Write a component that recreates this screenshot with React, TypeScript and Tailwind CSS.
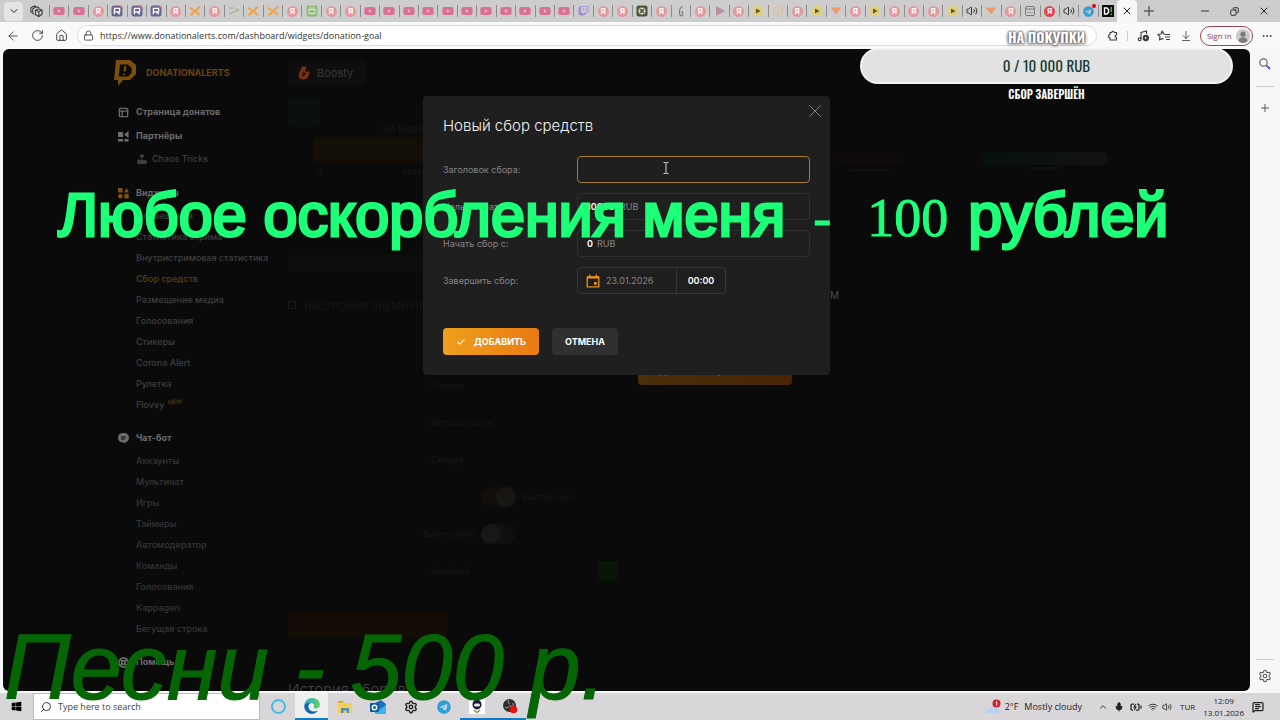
import React from "react";
import {
  ArrowLeft, RotateCw, House, Lock, ArrowDownToLine, Ellipsis, Search, Plus, X,
  Minus, Settings, Check, ChevronDown, ChevronUp, Volume2, Mic, BatteryCharging, Wifi, Copy,
  PanelsTopLeft, LifeBuoy, Joystick, MessageSquareText,
} from "lucide-react";
import { FaYoutube, FaTwitch, FaTelegram, FaWindows } from "react-icons/fa";

type TabKind =
  | "yt" | "ya" | "r" | "x" | "line" | "bag" | "tw" | "xb" | "g" | "pg" | "py" | "ring" | "heart"
  | "spk" | "cal" | "yab" | "tg" | "da";

const tabs: TabKind[] = [
  "yt", "yt", "ya", "r", "r", "r", "ya", "x", "ya", "line", "x", "x", "ya", "bag", "ya", "ya",
  "yt", "yt", "yt", "yt", "yt", "yt", "yt", "yt", "yt", "yt", "yt",
  "tw", "ya", "ya", "xb", "ya", "g", "ya", "pg", "ya", "py", "ring", "ya", "py", "heart",
  "ya", "py", "ya", "ya", "ya", "py", "spk", "heart", "ya", "cal", "yab", "spk", "tg", "da",
];

function TabIcon({ kind }: { kind: TabKind }) {
  switch (kind) {
    case "yt":
      return <FaYoutube className="size-3 text-[#dc6f96]" />;
    case "ya":
      return <span className="flex size-[11px] items-center justify-center rounded-full bg-[#e39a9f] text-[8px] leading-none font-bold text-white">Я</span>;
    case "yab":
      return <span className="flex size-[11px] items-center justify-center rounded-full bg-[#e0444a] text-[8px] leading-none font-bold text-white">Я</span>;
    case "r":
      return (
        <svg viewBox="0 0 12 12" className="size-3">
          <rect x="0.5" y="0.5" width="11" height="11" rx="2.5" fill="#68688f" />
          <path d="M8 .5h1a2.5 2.5 0 0 1 2.5 2.5v1z" fill="#dd6a9d" />
          <path d="M3.4 9.2V3.4h5.2v3.4H3.4M6.4 7l2.2 2.2" fill="none" stroke="#fff" strokeWidth="1.3" />
        </svg>
      );
    case "x":
      return (
        <svg viewBox="0 0 12 12" className="size-3">
          <path d="M1 2.5l4 3.2M11 1.5L1.5 10.5M6.5 6l4 4" fill="none" stroke="#eaa64e" strokeWidth="2" />
        </svg>
      );
    case "line":
      return (
        <svg viewBox="0 0 12 12" className="size-3">
          <path d="M1 3h5M1 9.5L6 6.5l5-1.5M7 3.5l4 1" fill="none" stroke="#9db48d" strokeWidth="1.2" />
        </svg>
      );
    case "bag":
      return (
        <svg viewBox="0 0 12 12" className="size-3">
          <rect x="0.5" y="0.5" width="11" height="11" rx="1.5" fill="#93bd82" />
          <path d="M3 4.5h6v4H3zM4.5 2v2M7.5 2v2" fill="none" stroke="#d8ead0" />
        </svg>
      );
    case "tw":
      return <FaTwitch className="size-[11px] text-[#a58ad6]" />;
    case "xb":
      return (
        <svg viewBox="0 0 12 12" className="size-3">
          <rect x="0.5" y="0.5" width="11" height="11" rx="2" fill="#4f5438" />
          <circle cx="6" cy="6" r="3.6" fill="#d9dccb" />
          <path d="M4 4l4 4M8 4L4 8" stroke="#4f5438" strokeWidth="1.6" />
        </svg>
      );
    case "g":
      return (
        <svg viewBox="0 0 12 12" className="size-3">
          <path d="M7.5 1.5C5 2.5 4.5 4.5 4.5 7s.7 4 2 4 1.5-1.5 1.2-4H6" fill="none" stroke="#777" strokeWidth="1.1" />
        </svg>
      );
    case "pg":
      return (
        <svg viewBox="0 0 12 12" className="size-3">
          <path d="M2 1l9 5-9 5z" fill="#b5929c" />
        </svg>
      );
    case "py":
      return (
        <svg viewBox="0 0 12 12" className="size-3">
          <circle cx="6" cy="6" r="5.3" fill="#e0cf76" />
          <path d="M4 3.4v5.2L8.6 6z" fill="#5e5636" />
        </svg>
      );
    case "ring":
      return (
        <svg viewBox="0 0 12 12" className="size-3">
          <circle cx="6" cy="6" r="4.5" fill="none" stroke="#e2bd8d" strokeWidth="1.2" />
          <path d="M6 4v4" stroke="#e2bd8d" />
        </svg>
      );
    case "heart":
      return (
        <svg viewBox="0 0 12 12" className="size-3">
          <path d="M0.5 2.5h11L6 9.5z" fill="#ea9a6b" />
        </svg>
      );
    case "spk":
      return <Volume2 className="size-3 text-[#333]" strokeWidth={2} />;
    case "cal":
      return (
        <svg viewBox="0 0 12 12" className="size-3" fill="none" stroke="#777">
          <rect x="1.5" y="1.5" width="9" height="9" rx="1.5" />
          <path d="M1.5 4h9M3.5 7.5h1M5.5 7.5h1M7.5 7.5h1" />
        </svg>
      );
    case "tg":
      return (
        <span className="relative">
          <FaTelegram className="size-[11px] text-[#3a9fd0]" />
          <span className="absolute -top-0.5 -right-0.5 size-1 rounded-full bg-red-600" />
        </span>
      );
    case "da":
      return (
        <svg viewBox="0 0 12 12" className="size-3">
          <rect width="12" height="12" fill="#0a0f0a" />
          <path d="M2.5 3v6h2.3L6.5 7.5v-3L5 3z" fill="none" stroke="#fff" strokeWidth="1.4" />
          <path d="M9.3 2v5M9.3 8.5V10" stroke="#35c24a" strokeWidth="1.5" />
        </svg>
      );
  }
}

function TabStrip() {
  return (
    <div className="flex h-[22px] items-center bg-[#cdcdcd]">
      <div className="flex w-[49px] items-center gap-[7px] pl-1">
        <button aria-label="Search tabs" className="flex size-[19px] items-center justify-center rounded bg-[#e4e4e4]">
          <ChevronDown className="size-3 text-[#222]" />
        </button>
        <button aria-label="Workspaces">
          <svg viewBox="0 0 14 14" className="size-[13px]" fill="none" stroke="#333" strokeWidth="1.1">
            <path d="M6 5.5l3.5-1.5L13 5.5V10l-3.5 2.5L6 10.5zM6 5.5L9.5 7 13 5.5M9.5 7v5.5" />
            <path d="M4.5 10L3 9.2V4l4-2 3 1M2 8L1 7.5V3l4-2 2.5 1" />
          </svg>
        </button>
      </div>
      <div className="flex min-w-0 flex-1">
        {tabs.map((kind, i) => (
          <div key={i} className="flex h-3 min-w-0 flex-1 items-center justify-center border-l border-[#8d8d8d]">
            <TabIcon kind={kind} />
          </div>
        ))}
      </div>
      <div className="flex h-full w-5 items-center justify-center self-end rounded-t bg-[#f7f7f7]">
        <button aria-label="Close tab"><X className="size-3 text-[#222]" /></button>
      </div>
      <div className="flex w-[143px] items-center justify-between pr-2.5 pl-1">
        <button aria-label="New tab"><Plus className="size-4 text-[#333]" strokeWidth={1.5} /></button>
        <div className="flex items-center gap-[19px]">
          <button aria-label="Minimize"><Minus className="size-3 text-[#333]" /></button>
          <button aria-label="Restore"><Copy className="size-[9px] -scale-x-100 text-[#222]" strokeWidth={2.5} /></button>
          <button aria-label="Close window"><X className="size-3 text-[#222]" /></button>
        </div>
      </div>
    </div>
  );
}

function Toolbar() {
  return (
    <div className="flex h-[27px] items-center bg-[#f9f9f9] text-[#3a3a3a]">
      <div className="flex w-[77px] items-center gap-[11px] pl-1.5">
        <button aria-label="Back"><ArrowLeft className="size-3.5" strokeWidth={1.5} /></button>
        <button aria-label="Refresh"><RotateCw className="size-[13px]" strokeWidth={1.7} /></button>
        <button aria-label="Home"><House className="size-[13px]" strokeWidth={1.7} /></button>
      </div>
      <label className="flex h-[21px] min-w-0 flex-1 items-center gap-1.5 rounded-full border border-[#dcdcdc] bg-white pl-[5px]">
        <Lock className="size-[11px] shrink-0" strokeWidth={1.8} />
        <input
          aria-label="Address"
          readOnly
          value="https://www.donationalerts.com/dashboard/widgets/donation-goal"
          className="min-w-0 flex-1 bg-transparent font-['Open_Sans',sans-serif] text-[9px] text-[#333] outline-none"
        />
      </label>
      <div className="flex w-[183px] items-center justify-between pr-[7px] pl-2.5">
        <button aria-label="Extensions">
          <svg viewBox="0 0 12 12" className="size-3" fill="none" stroke="currentColor" strokeWidth="1.1" strokeLinejoin="round">
            <path d="M3 2.5h1.7a1.3 1.3 0 0 1 2.6 0H9.5V5c-2 .2-2 2.3 0 2.5V10H3V7.6a1.4 1.4 0 1 1 0-2.7z" />
          </svg>
        </button>
        <span className="h-2.5 w-px bg-[#ccc]" />
        <button aria-label="Media">
          <svg viewBox="0 0 12 12" className="size-3" fill="none" stroke="currentColor" strokeWidth="1.1">
            <path d="M4 9V2.5L9.5 1v3" />
            <circle cx="2.6" cy="9.3" r="1.4" />
            <circle cx="8.8" cy="8" r="2.6" fill="currentColor" />
            <path d="M8 6.8v2.4L9.9 8z" fill="#fff" stroke="none" />
          </svg>
        </button>
        <button aria-label="Favorites">
          <svg viewBox="0 0 14 12" className="h-3 w-3.5" fill="none" stroke="currentColor" strokeWidth="1.1" strokeLinejoin="round">
            <path d="M8.5 4.3L6.7 4 5.3 1 3.9 4 .8 4.4 3 6.7 2.5 10 5.3 8.5l1.2.7M8.5 4.5h4.5M8 7h5M9 9.5h4" />
          </svg>
        </button>
        <button aria-label="Downloads"><ArrowDownToLine className="size-3" strokeWidth={1.6} /></button>
        <button className="flex h-5 items-center gap-1 rounded-full border border-[#96455a] pr-0.5 pl-1.5 font-['Open_Sans',sans-serif] text-[8px] text-[#8d3b50]">
          Sign in
          <svg viewBox="0 0 14 14" className="size-3.5">
            <circle cx="7" cy="7" r="7" fill="#c9c9c9" />
            <circle cx="7" cy="5.2" r="2.6" fill="#7b7b7b" />
            <path d="M2.5 12c.5-5 8.500-5 9 0-2.500 2.500-6.500 2.500-9 0z" fill="#7b7b7b" />
          </svg>
        </button>
        <button aria-label="More"><Ellipsis className="size-3" /></button>
      </div>
    </div>
  );
}

const widgetLinks = [
  "Оповещения", "Статистика стрима", "Внутристримовая статистика", "Сбор средств", "Размещение медиа",
  "Голосования", "Стикеры", "Corona Alert", "Рулетка", "Flovvy",
];
const botLinks = [
  "Аккаунты", "Мультичат", "Игры", "Таймеры", "Автомодератор", "Команды", "Голосования", "Kappagen", "Бегущая строка",
];

function NavHeader({ icon, label }: { icon: React.ReactNode; label: string }) {
  return (
    <a href="#" className="flex h-6 items-center gap-[7px] text-[9px] font-bold text-[#6a6a6a]">
      <span className="flex w-[11px] justify-center">{icon}</span>
      {label}
    </a>
  );
}

function NavLink({ label, tone }: { label: string; tone: string }) {
  return (
    <a href="#" className={`flex h-[21px] items-center gap-1 pl-[18px] text-[9px] font-medium ${tone}`}>
      {label}
      {label === "Flovvy" && <sup className="-rotate-6 text-[6px] text-[#5a3d0e]">NEW</sup>}
    </a>
  );
}

function SideNav() {
  return (
    <nav className="flex w-[170px] shrink-0 flex-col pt-[3px]">
      <NavHeader icon={<PanelsTopLeft className="size-[11px]" strokeWidth={3} />} label="Страница донатов" />
      <NavHeader
        icon={
          <svg viewBox="0 0 11 11" className="size-[11px]" fill="#6e6e6e">
            <path d="M0 1h5v5H0zM6 3.5L10.5 0v7zM0 8h5v2.5H0zM6.5 8h4v2.5h-4z" />
          </svg>
        }
        label="Партнёры"
      />
      <a href="#" className="flex h-[21px] items-center gap-1 pl-[18px] text-[9px] font-medium text-[#3f3f3f]">
        <Joystick className="size-3" fill="#3f3f3f" />
        Chaos Tricks
      </a>
      <div className="mt-3">
        <NavHeader
          icon={
            <svg viewBox="0 0 11 11" className="size-[11px]" fill="#7d5214">
              <path d="M0 0h4.5v4.5H0zM6 4.5L8.5 0 11 4.5z" />
              <rect y="6" width="4.5" height="4.5" rx="2" />
              <rect x="6.3" y="6" width="4.5" height="4.5" rx="1" />
            </svg>
          }
          label="Виджеты"
        />
        {widgetLinks.map((l) => (
          <NavLink key={l} label={l} tone={l === "Сбор средств" ? "text-[#5f3f10]" : "text-[#3f3f3f]"} />
        ))}
      </div>
      <div className="mt-[11px]">
        <NavHeader
          icon={
            <svg viewBox="0 0 11 11" className="size-[11px]">
              <path d="M5.5 0C9 0 11 2 11 4.800c0 2.400-1.500 4-3.500 4.500L6 11V9.500C2 9.700 0 7.800 0 4.800 0 2 2 0 5.500 0z" fill="#6a6a6a" />
              <path d="M3 4h5M3 6h4" stroke="#0a0a0a" />
            </svg>
          }
          label="Чат-бот"
        />
        {botLinks.map((l) => <NavLink key={l} label={l} tone="text-[#363636]" />)}
      </div>
      <div className="mt-[11px]">
        <NavHeader icon={<LifeBuoy className="size-[11px]" strokeWidth={3.5} />} label="Помощь" />
      </div>
    </nav>
  );
}

function Backdrop() {
  return (
    <div aria-hidden="true" className="flex min-w-0 flex-1 flex-col text-[9px] text-[#171717]">
      <div className="flex h-[184px] gap-5">
        <div className="flex w-[314px] flex-col pt-0.5">
          <div className="h-7 w-8 rounded bg-[#0b0f0f]" />
          <div className="-mt-1 pl-[95px]">НА КОФЕ</div>
          <div className="ml-[25px] h-[26px] rounded bg-[#140f06]" />
          <div className="flex gap-20 pt-0.5 pl-7"><span>0</span><span>осталось</span></div>
          <div className="mt-auto mb-2.5 h-4 bg-[#0d0d0d]" />
        </div>
        <div className="flex flex-1 items-start justify-between pt-[55px] pr-[27px]">
          <div className="ml-auto flex w-[90px] flex-col items-center gap-1 pr-5">
            <span className="h-[13px] w-full rounded-full bg-[#0f0a0b]" />
            <span className="h-0.5 w-10 bg-[#101010]" />
          </div>
          <div className="ml-14 flex w-[127px] flex-col items-center gap-0.5">
            <span className="h-[13px] w-full rounded-full bg-linear-to-r from-[#07110e] to-[#121212]" />
            <span className="h-0.5 w-7 bg-[#101010]" />
          </div>
        </div>
      </div>
      <div className="flex gap-[18px]">
        <div className="flex w-[332px] flex-col">
          <div className="flex h-[86px] items-start gap-2 pt-[18px] text-[10px]">
            <span className="mt-0.5 size-2 border border-[#191919]" />
            НАСТРОЙКИ ЭЛЕМЕНТОВ
          </div>
          <div className="flex h-[37px] items-center pl-[143px]">Плавно</div>
          <div className="flex h-[37px] items-center pl-[143px]">Использовать</div>
          <div className="flex h-[37px] items-center pl-[143px]">Сверху</div>
          <div className="flex h-[37px] items-center gap-1.5 pl-[193px]">
            <span className="flex h-5 w-[35px] justify-end rounded-full bg-[#120f0a]"><span className="size-5 rounded-full bg-[#171615]" /></span>
            Выключено
          </div>
          <div className="flex h-[37px] items-center gap-1.5 pl-[135px]">
            <span className="w-[52px]">Выключено</span>
            <span className="h-5 w-[35px] rounded-full bg-[#0f0f0f]"><span className="block size-5 rounded-full bg-[#171717]" /></span>
          </div>
          <div className="flex h-[37px] items-center justify-between pr-0.5 pl-[143px]">
            Зелёный <span className="size-5 rounded-sm bg-[#0a1508]" />
          </div>
          <div className="mt-[23px] h-[26px] w-[159px] rounded bg-[#130d06]" />
          <h2 className="mt-[41px] text-[15px] font-light text-[#444]">История сборов</h2>
        </div>
        <div className="flex flex-1 flex-col pt-[7px]">
          <div className="w-[201px] text-right text-[10px] text-[#4b4b4b]">УПРАВЛЕНИЕ СБОРОМ</div>
          <div className="mt-[55px] flex h-[27px] w-[154px] items-center justify-center rounded bg-linear-to-r from-[#4a2f08] to-[#4a2504] text-[9px] font-bold text-[#6b5a40]">
            ДОБАВИТЬ ЦЕЛЬ СБОРА
          </div>
        </div>
      </div>
    </div>
  );
}

function GoalDialog() {
  return (
    <form
      role="dialog"
      aria-label="Новый сбор средств"
      onSubmit={(e) => e.preventDefault()}
      className="relative w-[407px] rounded-sm bg-[#1f1f1f] px-5 pt-[18px] pb-5"
    >
      <button type="button" aria-label="Закрыть" className="absolute top-1 right-1">
        <X className="size-[22px] text-[#8a8a8a]" strokeWidth={1} />
      </button>
      <h1 className="text-[15px] leading-6 font-light text-[#f2f2f2]">Новый сбор средств</h1>
      <div className="mt-[18px] grid grid-cols-[134px_1fr] items-center gap-y-2.5 text-[9px] text-[#858585]">
        <label htmlFor="title">Заголовок сбора:</label>
        <input id="title" className="h-[27px] rounded border border-[#a97b25] bg-transparent px-2.5 font-semibold text-white outline-none" />
        <label htmlFor="goal">Цель собрать:</label>
        <div className="flex h-[27px] items-center gap-1 rounded border border-[#303030] px-[9px]">
          <input id="goal" defaultValue="10000" className="w-[29px] bg-transparent font-semibold text-white outline-none" />
          RUB
        </div>
        <label htmlFor="start">Начать сбор с:</label>
        <div className="flex h-[27px] items-center gap-1 rounded border border-[#303030] px-[9px]">
          <input id="start" defaultValue="0" className="w-1.5 bg-transparent font-semibold text-white outline-none" />
          RUB
        </div>
        <label htmlFor="date">Завершить сбор:</label>
        <div className="flex h-[27px] w-[149px] items-center rounded border border-[#363636]">
          <svg viewBox="0 0 14 14" className="mr-1.5 ml-2 size-3.5 shrink-0">
            <path d="M1.2 3.2h11.6v9.6H1.2z" fill="none" stroke="#e8941a" strokeWidth="1.3" />
            <path d="M1 2.2h12v2.3H1zM3 .5h1.4v2H3zM9.6.5H11v2H9.6zM8 8h2.8v2.8H8z" fill="#e8941a" />
          </svg>
          <input id="date" defaultValue="23.01.2026" className="w-[70px] bg-transparent outline-none" />
          <input aria-label="Время" defaultValue="00:00" className="h-full w-[49px] border-l border-[#363636] bg-transparent text-center font-semibold text-white outline-none" />
        </div>
      </div>
      <div className="mt-[34px] flex gap-[13px]">
        <button className="flex h-[27px] w-24 items-center justify-center gap-2 rounded bg-linear-to-r from-[#eea01c] to-[#ea7a12] text-[9px] font-bold text-white">
          <Check className="size-2.5" strokeWidth={2.5} />
          ДОБАВИТЬ
        </button>
        <button type="button" className="h-[27px] w-[66px] rounded bg-[#303030] text-[9px] font-bold text-white">ОТМЕНА</button>
      </div>
      <svg viewBox="0 0 6 12" className="absolute top-[66px] left-[240px] h-3 w-1.5">
        <path d="M.5.5h2l.5.5.5-.5h2M3 1v10M.5 11.5h2L3 11l.5.5h2" fill="none" stroke="#d0d0d0" />
      </svg>
    </form>
  );
}

function Page() {
  return (
    <main className="relative min-w-0 flex-1 overflow-hidden rounded-md bg-[#0a0a0a] font-[Inter,sans-serif]">
      <div className="mx-auto flex h-12 w-full max-w-[1031px] items-center">
        <svg viewBox="0 0 24 28" className="size-7">
          <path d="M3 1h14l6 5v9l-6 6H10l-5 6V21H1z" fill="#7a4e0c" />
          <path d="M7 5.500h8L18.500 9v5L15 17.500H5.800z" fill="#0a0a0a" />
          <path d="M12.500 7l-1 5.500M11 14.500l-.2 1.500" stroke="#7a4e0c" strokeWidth="2" />
        </svg>
        <span className="ml-[7px] w-[142px] text-[9px] font-bold text-[#6a430d]">DONATIONALERTS</span>
        <a href="#" className="flex h-[26px] w-[78px] items-center gap-[7px] rounded bg-[#0e0e0e] pl-2.5 text-[11px] text-[#383838]">
          <svg viewBox="0 0 12 14" className="h-3.5 w-3">
            <path d="M4 .5h4.500L7 5.500h4.500C12 10 9 13.500 5 13.500S0 10.500 1 8z" fill="#7a2c13" />
            <path d="M5.500 6l-1.500 5 4-3.500z" fill="#0f0f0f" />
          </svg>
          Boosty
        </a>
      </div>
      <div className="mx-auto flex w-full max-w-[1017px]">
        <SideNav />
        <Backdrop />
      </div>
      <div className="absolute inset-0 flex items-start justify-center pt-[47px]">
        <GoalDialog />
      </div>
    </main>
  );
}

function EdgeSidebar() {
  return (
    <aside className="flex w-[30px] flex-col items-center gap-[15px] py-2 text-[#555]">
      <button aria-label="Search">
        <svg viewBox="0 0 14 14" className="size-3.5" fill="none">
          <circle cx="5.5" cy="5.5" r="3.7" stroke="#666" strokeWidth="1.2" />
          <path d="M8.5 8.5L12 12" stroke="#6a52b8" strokeWidth="2" />
        </svg>
      </button>
      <span className="h-px w-[18px] bg-[#ccc]" />
      <button aria-label="Add"><Plus className="size-3" /></button>
      <span className="mt-auto h-px w-[18px] bg-[#ccc]" />
      <button aria-label="Settings" className="-mt-1.5"><Settings className="size-3.5" strokeWidth={1.8} /></button>
    </aside>
  );
}

function Taskbar() {
  return (
    <footer className="flex h-[27px] items-center bg-[#d8d6d9] font-['Open_Sans',sans-serif] text-[#222]">
      <button aria-label="Start" className="flex w-[33px] justify-center"><FaWindows className="size-[11px] text-black" /></button>
      <label className="flex h-full w-[227px] items-center gap-1.5 border border-[#bbb] bg-white pl-1.5">
        <Search className="size-3 -scale-x-100" strokeWidth={1.8} />
        <input aria-label="Search" placeholder="Type here to search" className="min-w-0 flex-1 bg-transparent text-[9px] outline-none placeholder:text-[#444]" />
      </label>
      <div className="flex h-full pl-0.5 [&>button]:flex [&>button]:w-[33px] [&>button]:items-center [&>button]:justify-center">
        <button aria-label="Cortana"><span className="size-[15px] rounded-full border-2 border-[#45bde0]" /></button>
        <button aria-label="Edge" className="border-b-2 border-[#1579c4] bg-[#efefef]">
          <svg viewBox="0 0 16 16" className="size-4">
            <defs>
              <linearGradient id="edgeTop" x1="0" y1="0" x2="1" y2="0">
                <stop offset="0" stopColor="#2aa7e0" />
                <stop offset="1" stopColor="#5fd45a" />
              </linearGradient>
            </defs>
            <path d="M.3 7C1 2.500 4.500 0 8.300 0 13 0 16 3.300 16 6.800c0 2.400-2 3.700-4 3.700-1.600 0-2.700-.7-2.200-1.500 1-1.600-.3-4-3.300-4C3.500 5 1 6.500.3 7z" fill="url(#edgeTop)" />
            <path d="M.2 8C.8 5.500 4 4.300 6.500 5 4.500 6 4 8 4.700 10c1 3 4.500 4.700 9.300 2.500C12.500 14.800 10.300 16 8 16 3.500 16 .2 12.300.2 8z" fill="#1666b8" />
          </svg>
        </button>
        <button aria-label="Files">
          <svg viewBox="0 0 16 16" className="size-4">
            <path d="M1 2h5l1 2h8v10H1z" fill="#f5cf5b" />
            <path d="M1 2h5v1.500H1z" fill="#d79b2c" />
            <path d="M4 14V9h8v5h-2.500v-2.500h-3V14z" fill="#4a93c6" />
          </svg>
        </button>
        <button aria-label="Outlook">
          <svg viewBox="0 0 16 16" className="size-4">
            <path d="M5 4l6-3 5 4v9H5z" fill="#1b6fc0" />
            <path d="M5 14l11-8v9H6z" fill="#39b5ea" />
            <rect y="4" width="9" height="9" rx="1" fill="#0f5aa8" />
            <circle cx="4.5" cy="8.5" r="2.2" fill="none" stroke="#fff" strokeWidth="1.4" />
          </svg>
        </button>
        <button aria-label="Settings"><Settings className="size-3.5 text-[#222]" strokeWidth={2.4} /></button>
        <button aria-label="Telegram"><FaTelegram className="size-3.5 text-[#2fa0d3]" /></button>
        <button aria-label="Game" className="border-b-2 border-[#1579c4]">
          <svg viewBox="0 0 16 16" className="size-4">
            <rect width="16" height="16" fill="#fff" />
            <ellipse cx="8" cy="6.5" rx="4.5" ry="5" fill="#1c1833" />
            <rect x="5" y="5.5" width="6" height="3" rx="1.5" fill="#e8e8e8" />
            <path d="M5 12l3 2.500 3-2.500" fill="none" stroke="#6fa050" strokeWidth="1.4" />
          </svg>
        </button>
        <button aria-label="OBS" className="border-b-2 border-[#1579c4]">
          <svg viewBox="0 0 16 16" className="size-4">
            <circle cx="7.5" cy="7.5" r="6.5" fill="#2c2c2c" />
            <path d="M7 2c-2 2 0 4 1 4M3 9c2 2 4 0 4-1M11 5c1 2 0 4-3 3" fill="none" stroke="#bbb" />
            <circle cx="11.5" cy="11.5" r="3.8" fill="#e31414" />
          </svg>
        </button>
      </div>
      <div className="ml-auto flex items-center text-[9px]">
        <svg viewBox="0 0 16 16" className="size-4">
          <path d="M1 14c-1-3 1-4 3-4 1-4 7-4 8 0 3 0 4 3 3 4z" fill="#b9d2f3" />
          <circle cx="11.5" cy="4.5" r="4" fill="#cf2027" />
          <path d="M10.7 3.3l1-.8v4.200" fill="none" stroke="#fff" />
        </svg>
        <span className="ml-1">2°F</span>
        <span className="ml-1.5">Mostly cloudy</span>
        <ChevronUp className="ml-4 size-2.5" />
        <Mic className="ml-1.5 size-2.5" fill="#222" />
        <BatteryCharging className="ml-1.5 size-3" strokeWidth={2.5} />
        <Wifi className="ml-1.5 size-2.5" />
        <Volume2 className="ml-1 size-2.5" />
        <span className="ml-2 text-[8px]">TUR</span>
        <div className="ml-2 flex flex-col items-center text-[8px] leading-3"><span>12:09</span><span>13.01.2026</span></div>
        <MessageSquareText className="mr-4 ml-2 size-3" strokeWidth={2.5} />
      </div>
    </footer>
  );
}

function GoalWidget() {
  return (
    <div className="absolute top-[26px] right-[47px] flex w-[373px] flex-col items-center font-['Oswald','Roboto_Condensed','Liberation_Sans_Narrow',sans-serif]">
      <div className="text-[14px] leading-[22px] font-bold text-white [text-shadow:0_0_3px_#555,0_0_2px_#444,0_1px_4px_#666]">НА ПОКУПКИ</div>
      <div className="flex h-9 w-full items-center justify-center rounded-full border-2 border-[#f2f2f2] bg-[#e2e2e2] pb-0.5 text-[15px] text-[#173c30]">
        0 / 10 000 RUB
      </div>
      <div className="text-[11px] leading-5 font-semibold text-white">СБОР ЗАВЕРШЁН</div>
    </div>
  );
}

export default function App() {
  return (
    <div className="relative flex h-screen flex-col overflow-hidden bg-[#f7f7f7] font-[Inter,sans-serif]">
      <TabStrip />
      <Toolbar />
      <div className="flex min-h-0 flex-1 pb-0.5 pl-[3px]">
        <Page />
        <EdgeSidebar />
      </div>
      <Taskbar />
      <GoalWidget />
      <div className="pointer-events-none absolute top-[175px] left-[58px] flex items-baseline font-['Liberation_Sans',sans-serif] text-[61px] leading-[80px] whitespace-nowrap text-[#1dff78] [-webkit-text-stroke:3px_#1dff78]">
        <span>Любое оскорбления меня</span>
        <span className="ml-7 font-['Liberation_Serif',serif] text-[54px] [-webkit-text-stroke:1px_#1dff78]">-</span>
        <span className="ml-9 font-['Liberation_Serif',serif] text-[54px] [-webkit-text-stroke:1px_#1dff78]">100</span>
        <span className="ml-5">рублей</span>
      </div>
      <div className="pointer-events-none absolute -bottom-0.5 left-1 font-['Liberation_Sans',sans-serif] text-[92px] leading-[110px] whitespace-nowrap text-[#066606] italic [-webkit-text-stroke:1px_#066606]">
        Песни - 500 р.
      </div>
    </div>
  );
}
